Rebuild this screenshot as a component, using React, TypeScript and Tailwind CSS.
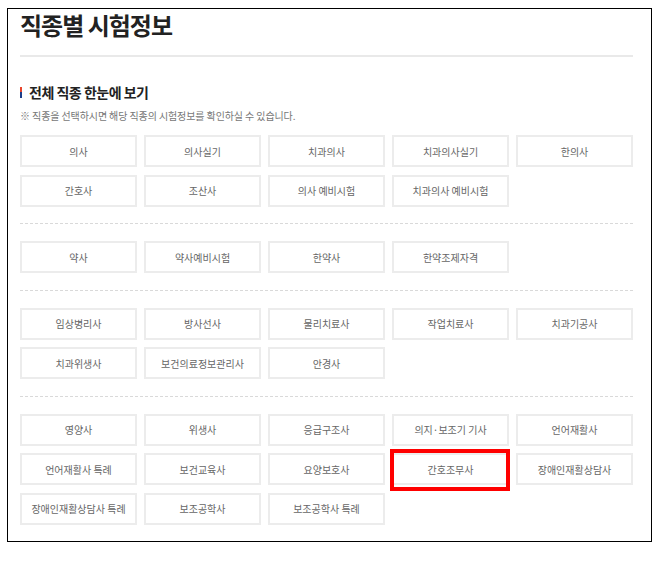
import React from "react";

const groups: string[][] = [
  ["의사", "의사실기", "치과의사", "치과의사실기", "한의사", "간호사", "조산사", "의사 예비시험", "치과의사 예비시험"],
  ["약사", "약사예비시험", "한약사", "한약조제자격"],
  ["임상병리사", "방사선사", "물리치료사", "작업치료사", "치과기공사", "치과위생사", "보건의료정보관리사", "안경사"],
  [
    "영양사",
    "위생사",
    "응급구조사",
    "의지·보조기 기사",
    "언어재활사",
    "언어재활사 특례",
    "보건교육사",
    "요양보호사",
    "간호조무사",
    "장애인재활상담사",
    "장애인재활상담사 특례",
    "보조공학사",
    "보조공학사 특례",
  ],
];

function Btn({ label }: { label: string }) {
  const highlighted = label === "간호조무사";
  return (
    <div className="relative">
      <div className="flex h-[32px] items-center justify-center border-2 border-[#ececec] bg-white text-[10px] tracking-[0px] text-[#666]">
        {label}
      </div>
      {highlighted && (
        <div className="pointer-events-none absolute -top-[4px] -bottom-[6px] -left-[2px] -right-[1px] border-4 border-[#ff0000]" />
      )}
    </div>
  );
}

export default function App() {
  return (
    <div
      className="min-h-[562px] bg-white pt-[8px] pl-[7px]"
      style={{ fontFamily: '"Noto Sans CJK KR", "Noto Sans", sans-serif' }}
    >
      <div className="w-[645px] border border-black pt-[1px] pr-[18px] pb-[16px] pl-[12px]">
        <h1 className="text-[24px] leading-[30px] font-bold tracking-[-1px] text-[#222]">직종별 시험정보</h1>
        <div className="mt-[15px] h-[2px] bg-[#e9e9e9]" />
        <div className="mt-[25px] flex items-center leading-[20px]">
          <span className="mr-[7px] flex h-[11px] w-[2px] flex-col">
            <span className="flex-1 bg-[#e8452c]" />
            <span className="flex-1 bg-[#1e3f8a]" />
          </span>
          <span className="text-[14px] font-bold tracking-[-0.5px] text-[#222]">전체 직종 한눈에 보기</span>
        </div>
        <p className="mt-[6px] text-[10px] leading-[16px] tracking-[-0.1px] text-[#777]">
          ※ 직종을 선택하시면 해당 직종의 시험정보를 확인하실 수 있습니다.
        </p>
        <div className="mt-[11px]">
          {groups.map((g, gi) => (
            <React.Fragment key={gi}>
              {gi > 0 && <div className="my-[16.75px] border-t border-dashed border-[#d9d9d9]" />}
              <div className="grid grid-cols-[repeat(5,117px)] gap-x-[7px] gap-y-[7.5px]">
                {g.map((label) => (
                  <Btn key={label} label={label} />
                ))}
              </div>
            </React.Fragment>
          ))}
        </div>
      </div>
    </div>
  );
}
